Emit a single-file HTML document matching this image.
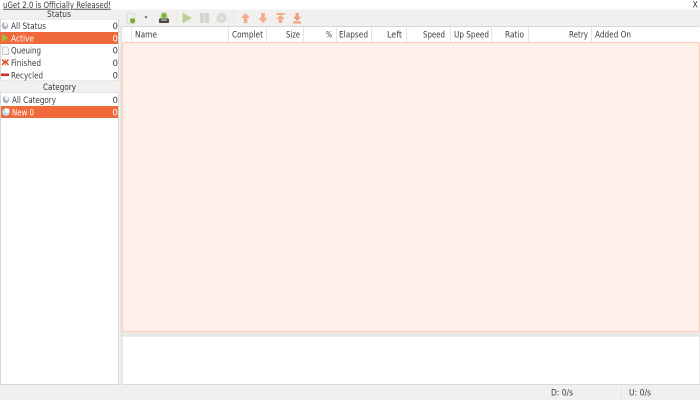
<!DOCTYPE html>
<html><head><meta charset="utf-8"><style>
html,body{margin:0;padding:0;width:700px;height:400px;overflow:hidden;background:#f1f0ee}
svg{display:block;filter:blur(.35px)}
text{font-family:"DejaVu Sans","Liberation Sans",sans-serif;font-size:8.5px;fill:#3a3a3a}
</style></head><body>
<svg width="700" height="400" viewBox="0 0 700 400" xmlns="http://www.w3.org/2000/svg">
<rect width="700" height="400" fill="#f1f0ee"/>
<rect width="700" height="9.500" fill="#fff"/>
<text x="3" y="7.800" textLength="108" lengthAdjust="spacingAndGlyphs" text-decoration="underline">uGet 2.0 is Officially Released!</text>
<text x="692.500" y="7.500" textLength="5.500" lengthAdjust="spacingAndGlyphs">X</text>

<!-- sidebar -->
<rect x="0" y="19" width="119" height="62" fill="#d8d6d2"/>
<rect x="1" y="19.500" width="117" height="61" fill="#fff"/>
<text x="47" y="17" textLength="24" lengthAdjust="spacingAndGlyphs">Status</text>
<rect x="0" y="32" width="118" height="12" fill="#f0693a"/>
<text x="11" y="28.800" textLength="35" lengthAdjust="spacingAndGlyphs">All Status</text>
<text x="11" y="41.300" textLength="23" lengthAdjust="spacingAndGlyphs" style="fill:#fff">Active</text>
<text x="11" y="53.500" textLength="30" lengthAdjust="spacingAndGlyphs">Queuing</text>
<text x="11" y="66" textLength="30" lengthAdjust="spacingAndGlyphs">Finished</text>
<text x="11" y="78.300" textLength="32" lengthAdjust="spacingAndGlyphs">Recycled</text>
<text x="112.500" y="28.800">0</text>
<text x="112.500" y="41.300" style="fill:#fff">0</text>
<text x="112.500" y="53.500">0</text>
<text x="112.500" y="66">0</text>
<text x="112.500" y="78.300">0</text>

<text x="43" y="90" textLength="33" lengthAdjust="spacingAndGlyphs">Category</text>
<rect x="0" y="92.500" width="119" height="292.500" fill="#d8d6d2"/>
<rect x="1" y="93" width="117" height="291" fill="#fff"/>
<rect x="1" y="106" width="117" height="12" fill="#f0693a"/>
<text x="12" y="102.800" textLength="44" lengthAdjust="spacingAndGlyphs">All Category</text>
<text x="12" y="115.300" textLength="22" lengthAdjust="spacingAndGlyphs" style="fill:#fff">New 0</text>
<text x="112.500" y="102.800">0</text>
<text x="112.500" y="115.300" style="fill:#fff">0</text>

<!-- sidebar icons -->
<ellipse cx="5" cy="25.500" rx="3.200" ry="3.800" fill="#a8b2be"/><path d="M4 22h3.200v4.200H4z" fill="#eef1f4"/>
<path d="M2 34.200l6.200 3.800-6.200 3.800z" fill="#9ac63c"/>
<path d="M2.500 46.800h4l2 2v5.700h-6z" fill="#f6f6f4" stroke="#b4b4b0" stroke-width=".7"/>
<path d="M2 59.500l2.500 2.500-2.500 3M8.500 59.500l-2.500 2.500 2.500 3" fill="none" stroke="#d9501e" stroke-width="1.400"/><rect x="4.700" y="59.500" width="1" height="6" fill="#d9501e"/>
<rect x="1" y="73.500" width="8" height="2.600" fill="#c9302c"/>
<ellipse cx="6" cy="99.500" rx="3.200" ry="3.800" fill="#a8b2be"/><path d="M5 96h3.200v4.200H5z" fill="#eef1f4"/>
<ellipse cx="6" cy="112" rx="3.800" ry="3.800" fill="#c4daec"/><path d="M5 108.500h4.200v4.200H5z" fill="#f6f9fb"/>

<!-- toolbar icons -->
<path d="M127 13h6l2 2v8.500h-8z" fill="#eeeeea" stroke="#c8c8c4" stroke-width=".6"/>
<circle cx="132.500" cy="20.700" r="2.600" fill="#7cab2d"/>
<path d="M144.500 16.500h3l-1.500 2z" fill="#333"/>
<path d="M160 19l1.500-6.500h5l1.500 6.500z" fill="#b4cf88"/>
<circle cx="164" cy="15.500" r="2.100" fill="#7fae34"/>
<rect x="159" y="18.500" width="10" height="4.500" rx=".8" fill="#4a4a46"/>
<rect x="161" y="19.500" width="6" height="1" fill="#ddd"/>
<rect x="176.500" y="11" width="1" height="14" fill="#e8e7e4"/>
<path d="M182.500 12.500l9.500 5.500-9.500 5.500z" fill="#bcd198"/>
<rect x="200" y="13" width="4.300" height="10" fill="#d4d4d1"/>
<rect x="205" y="13" width="4.300" height="10" fill="#d4d4d1"/>
<circle cx="221.500" cy="18" r="5" fill="#d8d8d5"/><circle cx="221.500" cy="18" r="2" fill="#e6e6e3"/>
<rect x="233" y="11" width="1" height="14" fill="#e8e7e4"/>
<path d="M245.500 13l4.500 5h-2.700v5h-3.600v-5H241z" fill="#f5aa8a"/>
<path d="M263 23l4.500-5h-2.700v-5h-3.600v5h-2.700z" fill="#f5aa8a"/>
<path d="M276.500 13h8v2h-8zM280.500 15l4.500 4h-2.700v4h-3.600v-4H276z" fill="#f5aa8a"/>
<path d="M293 21.500h8v2h-8zM295.500 13h3.200v3.800h2.500l-4.100 4.500-4.100-4.500h2.500z" fill="#f2a07c"/>

<!-- table header -->
<rect x="122" y="26.500" width="578" height="16" fill="#fff"/>
<rect x="121.500" y="26" width="578" height="1" fill="#d8d6d2"/>
<g fill="#e6e5e2">
<rect x="131" y="27" width="1" height="15"/><rect x="228" y="27" width="1" height="15"/><rect x="266" y="27" width="1" height="15"/><rect x="303" y="27" width="1" height="15"/><rect x="336" y="27" width="1" height="15"/><rect x="371" y="27" width="1" height="15"/><rect x="406" y="27" width="1" height="15"/><rect x="450" y="27" width="1" height="15"/><rect x="491" y="27" width="1" height="15"/><rect x="528" y="27" width="1" height="15"/><rect x="591" y="27" width="1" height="15"/>
</g>
<text x="135" y="37.300" textLength="22" lengthAdjust="spacingAndGlyphs">Name</text>
<text x="232" y="37.300" textLength="31" lengthAdjust="spacingAndGlyphs">Complet</text>
<text x="286" y="37.300" textLength="14" lengthAdjust="spacingAndGlyphs">Size</text>
<text x="326" y="37.300" textLength="6" lengthAdjust="spacingAndGlyphs">%</text>
<text x="339" y="37.300" textLength="29" lengthAdjust="spacingAndGlyphs">Elapsed</text>
<text x="387" y="37.300" textLength="15" lengthAdjust="spacingAndGlyphs">Left</text>
<text x="423" y="37.300" textLength="22" lengthAdjust="spacingAndGlyphs">Speed</text>
<text x="454" y="37.300" textLength="35" lengthAdjust="spacingAndGlyphs">Up Speed</text>
<text x="505" y="37.300" textLength="19" lengthAdjust="spacingAndGlyphs">Ratio</text>
<text x="569" y="37.300" textLength="19" lengthAdjust="spacingAndGlyphs">Retry</text>
<text x="595" y="37.300" textLength="36" lengthAdjust="spacingAndGlyphs">Added On</text>

<!-- list -->
<rect x="120.500" y="26" width="1.500" height="310" fill="#e2e1de"/>
<rect x="122.500" y="42.500" width="577" height="289" rx="1.500" fill="#fff0ea" stroke="#fbd0bf" stroke-width="1.200"/>
<rect x="122" y="332.500" width="578" height="2.500" fill="#e8e9e7"/>

<!-- details -->
<rect x="121.500" y="335.500" width="578.500" height="49.500" fill="#dcdad6"/>
<rect x="122.500" y="336.500" width="577" height="47.500" fill="#fff"/>

<!-- status bar -->
<rect x="621" y="388" width="1" height="10" fill="#e2e1de"/>
<text x="551" y="395.500" textLength="22" lengthAdjust="spacingAndGlyphs">D:  0/s</text>
<text x="629" y="395.500" textLength="22" lengthAdjust="spacingAndGlyphs">U:  0/s</text>
</svg>
</body></html>
